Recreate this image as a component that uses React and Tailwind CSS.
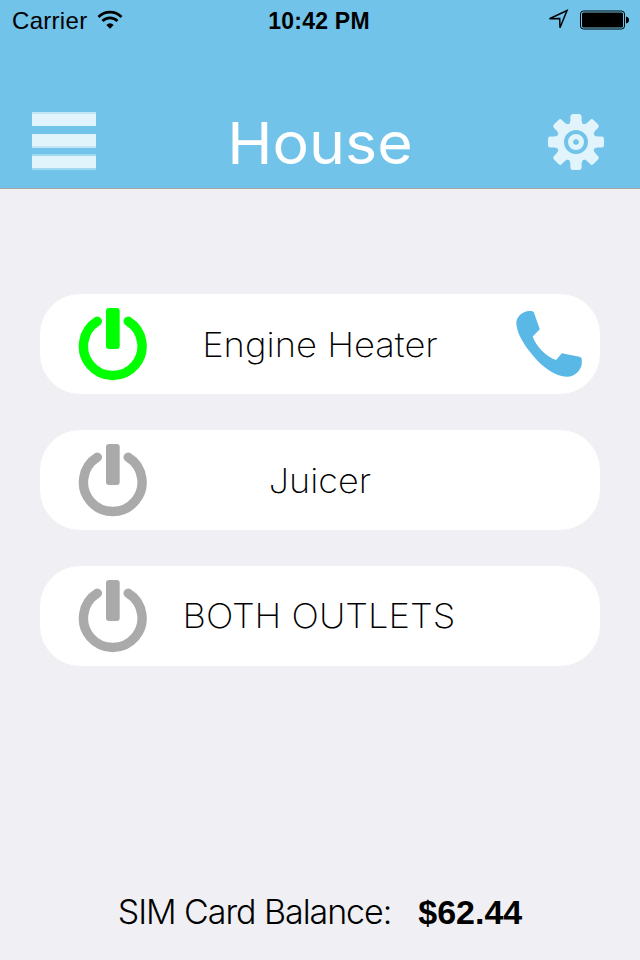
import React from 'react';

const OUTLETS = [
  { name: 'Engine Heater', on: true, callable: true, text: 'scale-x-[1.07]' },
  { name: 'Juicer', on: false, callable: false, text: 'scale-x-[1.06]' },
  { name: 'BOTH OUTLETS', on: false, callable: false, text: 'pb-[2px] pr-[2px] scale-x-[1.068]' },
];

const WifiIcon = () => (
  <svg width="26" height="20" viewBox="0 0 26 20" fill="none" stroke="#000" strokeWidth="2.8">
    <path d="M1.5 6.9 A16.3 16.3 0 0 1 24.5 6.9" />
    <path d="M5.5 11 A10.6 10.6 0 0 1 20.5 11" />
    <path d="M9.3 14.9 Q13 11.6 16.7 14.9 L13 18.7 Z" fill="#000" stroke="none" />
  </svg>
);

const LocationIcon = () => (
  <svg width="22" height="22" viewBox="0 0 22 22" fill="none" stroke="#000" strokeWidth="1.5">
    <path d="M1.5 9.7 L19 1.5 L12 18.7 L11.7 9.5 Z" />
  </svg>
);

const BatteryIcon = () => (
  <svg width="50" height="20" viewBox="0 0 50 20">
    <rect x="0.5" y="1" width="44" height="18" rx="3" fill="none" stroke="#000" />
    <rect x="2" y="2.5" width="41" height="15" rx="1.5" />
    <path d="M46 6.5 Q49 7 49 10 Q49 13 46 13.5 Z" />
  </svg>
);

const GearIcon = () => (
  <svg width="56" height="56" viewBox="-28 -28 56 56" fill="#e1f3fb">
    {[0, 45, 90, 135, 180, 225, 270, 315].map((angle) => (
      <path
        key={angle}
        transform={`rotate(${angle})`}
        d="M-7.5 -17 Q-5.6 -19 -5.6 -22 V-25.5 Q-5.6 -28 -3.2 -28 H3.2 Q5.6 -28 5.6 -25.5 V-22 Q5.6 -19 7.5 -17 Z"
      />
    ))}
    <circle r="19.5" />
    <circle r="10" fill="none" stroke="#71c3e9" strokeWidth="4" />
    <circle r="2.8" fill="#71c3e9" />
  </svg>
);

const PowerIcon = ({ on }) => (
  <svg width="70" height="74" viewBox="0 0 70 74" className={on ? 'text-[#00ff00]' : 'text-[#aaaaaa]'}>
    <path
      d="M19.3 14.3 A29.3 29.3 0 1 0 50.2 14.3"
      fill="none"
      stroke="currentColor"
      strokeWidth="9.4"
      strokeLinecap="round"
    />
    <rect x="28" y="1" width="13.7" height="41" rx="3" fill="currentColor" />
  </svg>
);

const PhoneIcon = () => (
  <svg width="68" height="68" viewBox="0 0 68 68" fill="#5ab8e7">
    <path d="M14.5 1 Q18.2 0.8 18.8 2.2 L24.8 19.3 L17.7 26.5 C20.5 35.5 31 46.8 41 50 L46.8 43.2 L64.5 46.8 Q66.8 47.2 66.8 49.5 V54 C66 61 58.5 67 52.3 66.7 C41 67 27 57 17.5 45 C9 35 1.3 23 1.3 12.3 C1.8 6.5 7.5 1.4 14.5 1 Z" />
  </svg>
);

const StatusBar = () => (
  <div className="grid h-10 grid-cols-[1fr_auto_1fr] items-center pl-3 pr-[10px] font-['Liberation_Sans'] text-black">
    <div className="flex items-center gap-[10px]">
      <span className="pt-[2px] text-[24px] leading-[28px] tracking-[0.3px]">Carrier</span>
      <WifiIcon />
    </div>
    <span className="pr-[4px] pt-[2px] text-[23px] font-bold leading-[28px] tracking-[0.25px]">10:42 PM</span>
    <div className="flex items-center justify-end gap-[10px]">
      <LocationIcon />
      <BatteryIcon />
    </div>
  </div>
);

const Header = () => (
  <header className="h-[189px] border-b border-[#a7a7aa] bg-[#71c3e9]">
    <StatusBar />
    <div className="grid grid-cols-[64px_1fr_64px] items-start px-8 pt-[72px]">
      <button aria-label="Menu" className="flex flex-col">
        <span className="h-[14px] w-16 border-t-2 border-[#c3e6f6] bg-[#e1f3fb]" />
        <span className="mt-2 h-[14px] w-16 border-b-2 border-[#c3e6f6] bg-[#e1f3fb]" />
        <span className="mt-[6px] h-4 w-16 border-y-2 border-[#a0d7f1] bg-[#e1f3fb]" />
      </button>
      <h1 className="scale-x-[1.05] text-center font-['Inter'] text-[58px] font-normal leading-[63px] text-white">
        House
      </h1>
      <button aria-label="Settings" className="flex justify-end pr-1 pt-[2px]">
        <GearIcon />
      </button>
    </div>
  </header>
);

const OutletRow = ({ outlet }) => (
  <div className="grid h-[100px] grid-cols-[110px_1fr_110px] items-center rounded-[40px] bg-white">
    <div className="pl-[38px]">
      <PowerIcon on={outlet.on} />
    </div>
    <span className={`whitespace-nowrap text-center font-['Inter'] text-[34px] font-extralight text-black ${outlet.text}`}>
      {outlet.name}
    </span>
    <div className="flex justify-end pr-[17px]">{outlet.callable && <PhoneIcon />}</div>
  </div>
);

const App = () => (
  <div className="flex h-[960px] w-[640px] flex-col overflow-hidden bg-[#efeff4]">
    <Header />
    <main className="flex flex-col gap-9 px-10 pt-[105px]">
      {OUTLETS.map((outlet) => (
        <OutletRow key={outlet.name} outlet={outlet} />
      ))}
    </main>
    <footer className="mt-auto flex items-center justify-center gap-[27px] pb-[28px] text-black">
      <span className="font-['Inter'] text-[34px] font-light leading-[40px] tracking-[-1.05px]">SIM Card Balance:</span>
      <span className="font-['Liberation_Sans'] text-[34px] font-bold leading-[40px]">$62.44</span>
    </footer>
  </div>
);

export default App;
